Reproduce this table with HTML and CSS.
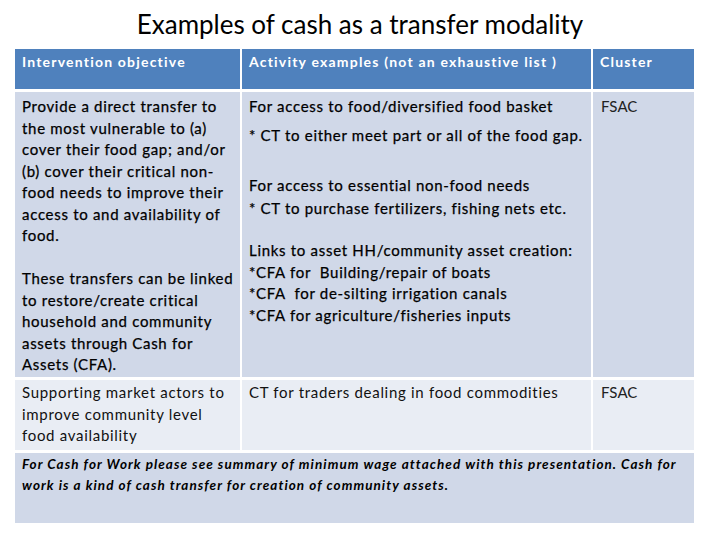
FILE: index.html
```html
<!DOCTYPE html>
<html>
<head>
<meta charset="utf-8">
<link rel="stylesheet" href="styles.css">
</head>
<body>
<h1 class="title">Examples of cash as a transfer modality</h1>
<div class="table">
  <div class="cell head">Intervention objective</div>
  <div class="cell head">Activity examples (not an exhaustive list )</div>
  <div class="cell head">Cluster</div>

  <div class="cell r1 strong">
    <p class="para">Provide a direct transfer to<br>the most vulnerable to (a)<br>cover their food gap; and/or<br>(b) cover their critical non-<br>food needs to improve their<br>access to and availability of<br>food.</p>
    <p class="para p-gap">These transfers can be linked<br>to restore/create critical<br>household and community<br>assets through Cash for<br>Assets (CFA).</p>
  </div>
  <div class="cell r1 strong">
    <p class="para">For access to food/diversified food basket</p>
    <p class="para a2">* CT to either meet part or all of the food gap.</p>
    <p class="para a3">For access to essential non-food needs</p>
    <p class="para a4">* CT to purchase fertilizers, fishing nets etc.</p>
    <p class="para a5">Links to asset HH/community asset creation:<br>*CFA for&nbsp; Building/repair of boats<br>*CFA&nbsp; for de-silting irrigation canals<br>*CFA for agriculture/fisheries inputs</p>
  </div>
  <div class="cell r1 light">FSAC</div>

  <div class="cell r2">Supporting market actors to<br>improve community level<br>food availability</div>
  <div class="cell r2">CT for traders dealing in food commodities</div>
  <div class="cell r2 light">FSAC</div>

  <div class="cell foot">For Cash for Work please see summary of minimum wage attached with this presentation. Cash for<br>work is a kind of cash transfer for creation of community assets.</div>
</div>
</body>
</html>
```
FILE: styles.css
```css
html, body {
  margin: 0;
  padding: 0;
  background: #ffffff;
}
body {
  font-family: Lato, "Open Sans", sans-serif;
  color: #111111;
  width: 720px;
  height: 540px;
  overflow: hidden;
}
.title {
  margin: 0;
  height: 49px;
  display: flex;
  align-items: center;
  justify-content: center;
  font-size: 26px;
  font-weight: 400;
  line-height: 30px;
  padding-bottom: 2px;
  box-sizing: border-box;
  color: #000000;
}
.table {
  margin-left: 15px;
  display: grid;
  grid-template-columns: 225px 349px 101px;
  grid-template-rows: 40px 285px 70px 70px;
  column-gap: 2px;
  row-gap: 3px;
  width: 679px;
}
.cell {
  box-sizing: border-box;
  padding: 4px 0 0 7px;
  font-size: 15px;
  line-height: 21.5px;
  letter-spacing: 0.7px;
  white-space: nowrap;
}
.head {
  background: #4f81bd;
  color: #ffffff;
  font-weight: 700;
  font-size: 14px;
  line-height: 20px;
  letter-spacing: 1.2px;
  padding-top: 3px;
}
.r1 {
  background: #d0d8e8;
}
.r2 {
  background: #e9edf4;
  padding-top: 2px;
}
.strong {
  color: #000000;
  -webkit-text-stroke: 0.25px #000000;
}
.light {
  padding-left: 8px;
  color: #222222;
  letter-spacing: 0.1px;
}
.head.light {
  color: #ffffff;
  letter-spacing: 1.2px;
}
.para {
  margin: 0;
}
.p-gap {
  margin-top: 21.5px;
}
.a2 { margin-top: 7px; }
.a3 { margin-top: 29px; }
.a4 { margin-top: 1px; }
.a5 { margin-top: 21px; }
.foot {
  grid-column: 1 / 4;
  background: #d0d8e8;
  font-weight: 700;
  font-style: italic;
  font-size: 13.5px;
  line-height: 20.5px;
  letter-spacing: 1.05px;
  padding-top: 1px;
  color: #000000;
}
```
